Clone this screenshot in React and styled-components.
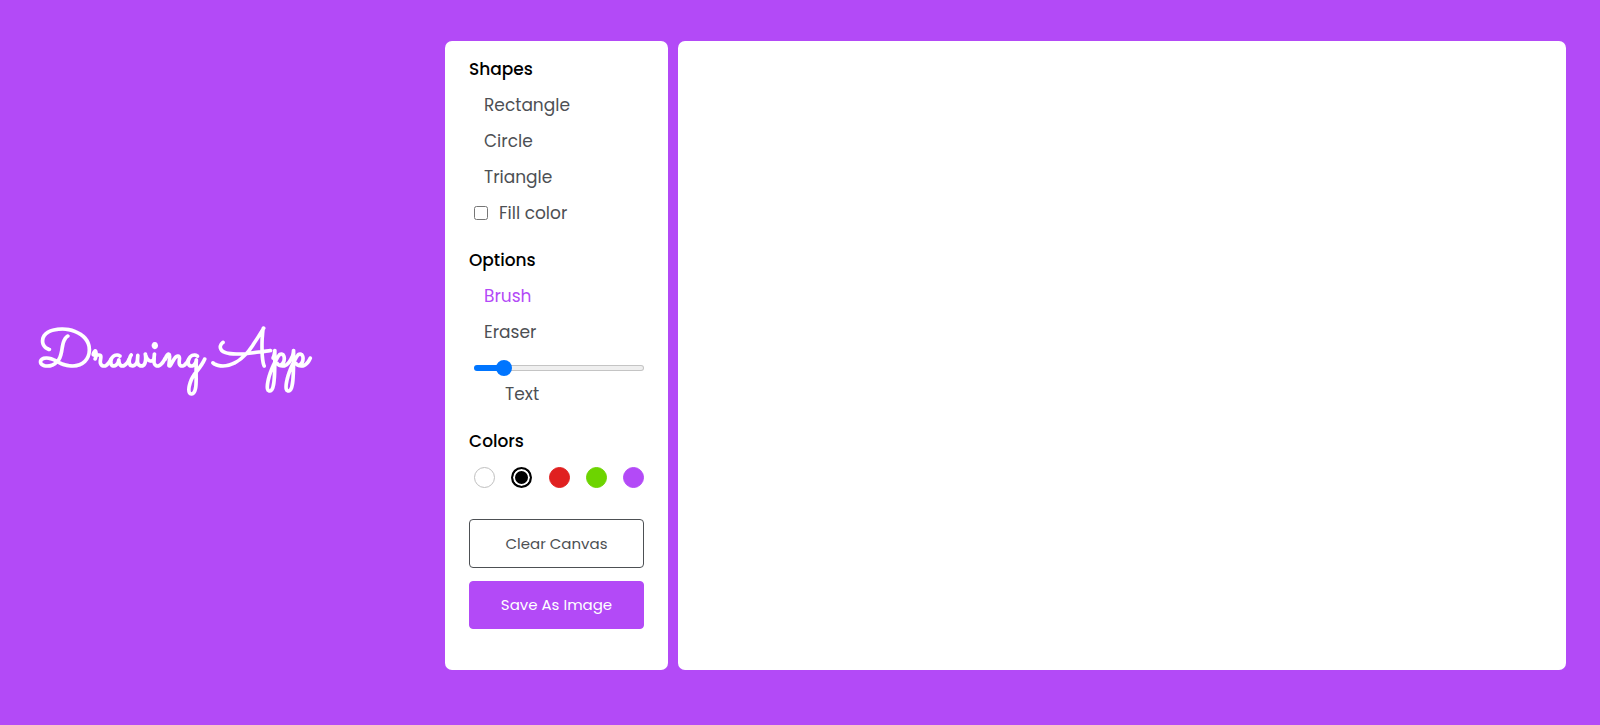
import React, { useState } from "react";
import styled, { createGlobalStyle } from "styled-components";

const GlobalStyle = createGlobalStyle`
  * { box-sizing: border-box; }
  body {
    margin: 0;
    background: #b34af7;
    color: #4d5054;
    font-family: Poppins, Inter, "Noto Sans", sans-serif;
    font-size: 17px;
    line-height: 26px;
  }
`;

const Page = styled.main`
  display: grid;
  grid-template-columns: 407px 223px 1fr;
  column-gap: 10px;
  padding: 41px 34px 55px 28px;
`;

const Title = styled.h1`
  margin: 0;
  padding-left: 10px;
  align-self: center;
  color: #fff;
  font: 700 53px/78px Sacramento, "Liberation Serif", cursive;
  white-space: nowrap;
`;

const Tools = styled.aside`
  padding: 15px 24px 41px;
  background: #fff;
  border-radius: 7px;
`;

const Group = styled.section`
  margin-bottom: 21px;
`;

const Heading = styled.h2`
  margin: 0 0 10px;
  color: #000;
  font-size: 17px;
  font-weight: 500;
  line-height: 26px;
`;

const ToolList = styled.ul`
  list-style: none;
  margin: 0;
  padding: 0 0 0 5px;
  display: flex;
  flex-direction: column;
  gap: 10px;
`;

const Item = styled.li`
  display: flex;
  align-items: center;
  height: 26px;
`;

const ToolButton = styled.button`
  border: 0;
  background: none;
  margin: 0;
  padding: 0 0 0 ${(p) => (p.$indented ? 31 : 10)}px;
  display: block;
  font: inherit;
  cursor: pointer;
  color: ${(p) => (p.$active ? "#b34af7" : "inherit")};
`;

const Check = styled.input`
  width: 14px;
  height: 14px;
  margin: 0 11px 0 0;
`;

const Range = styled.input`
  appearance: none;
  flex: 1;
  min-width: 0;
  height: 16px;
  margin: 0;
  background: none;

  &::-webkit-slider-runnable-track {
    height: 6px;
    border: 1px solid transparent;
    border-radius: 3px;
    background:
      linear-gradient(#0075ff, #0075ff) 0 0 / var(--filled) 100% no-repeat border-box,
      linear-gradient(#efefef, #efefef) padding-box,
      linear-gradient(#c4c4c4, #c4c4c4) border-box;
  }

  &::-webkit-slider-thumb {
    appearance: none;
    width: 16px;
    height: 16px;
    margin-top: -6px;
    border-radius: 50%;
    background: #0075ff;
  }
`;

const Swatches = styled.div`
  display: flex;
  align-items: center;
  justify-content: space-between;
  height: 26px;
  padding-left: 5px;
`;

const Swatch = styled.input`
  appearance: none;
  width: 21px;
  height: 21px;
  margin: 0;
  border-radius: 50%;
  background: ${(p) => p.$color};
  border: 1px solid ${(p) => p.$edge || p.$color};
  cursor: pointer;

  &:checked {
    border-width: 2px;
    box-shadow: inset 0 0 0 2px #fff;
  }
`;

const Actions = styled.div`
  display: flex;
  flex-direction: column;
  gap: 13px;
  margin-top: 29px;
`;

const Action = styled.button`
  width: 100%;
  height: ${(p) => (p.$primary ? 48 : 49)}px;
  padding: 0;
  border: 1px solid ${(p) => (p.$primary ? "#b34af7" : "#4d5054")};
  border-radius: 4px;
  background: ${(p) => (p.$primary ? "#b34af7" : "#fff")};
  color: ${(p) => (p.$primary ? "#fff" : "#4d5054")};
  font: inherit;
  font-size: 15px;
  cursor: pointer;
`;

const Board = styled.section`
  display: flex;
  background: #fff;
  border-radius: 7px;
  overflow: hidden;
`;

const Canvas = styled.canvas`
  flex: 1;
  min-width: 0;
`;

const colors = [
  { name: "White", value: "#fff", edge: "#bfbfbf" },
  { name: "Black", value: "#000" },
  { name: "Red", value: "#e02020" },
  { name: "Green", value: "#6dd400" },
  { name: "Purple", value: "#b34af7" },
];

const MIN_SIZE = 1;
const MAX_SIZE = 30;

export default function App() {
  const [tool, setTool] = useState("Brush");
  const [color, setColor] = useState("Black");
  const [size, setSize] = useState(5);
  const filled = `${((size - MIN_SIZE) / (MAX_SIZE - MIN_SIZE)) * 100}%`;

  const renderTool = (name) => (
    <Item key={name}>
      <ToolButton type="button" $active={tool === name} onClick={() => setTool(name)}>
        {name}
      </ToolButton>
    </Item>
  );

  return (
    <>
      <GlobalStyle />
      <Page>
        <Title>Drawing App</Title>
        <Tools>
          <Group>
            <Heading>Shapes</Heading>
            <ToolList>
              {["Rectangle", "Circle", "Triangle"].map(renderTool)}
              <Item>
                <Check type="checkbox" id="fill" />
                <label htmlFor="fill">Fill color</label>
              </Item>
            </ToolList>
          </Group>
          <Group>
            <Heading>Options</Heading>
            <ToolList>
              {["Brush", "Eraser"].map(renderTool)}
              <li>
                <Item as="div">
                  <Range
                    type="range"
                    aria-label="Brush size"
                    min={MIN_SIZE}
                    max={MAX_SIZE}
                    value={size}
                    style={{ "--filled": filled }}
                    onChange={(e) => setSize(Number(e.target.value))}
                  />
                </Item>
                <ToolButton
                  type="button"
                  $indented
                  $active={tool === "Text"}
                  onClick={() => setTool("Text")}
                >
                  Text
                </ToolButton>
              </li>
            </ToolList>
          </Group>
          <section>
            <Heading>Colors</Heading>
            <Swatches>
              {colors.map((c) => (
                <Swatch
                  key={c.name}
                  type="radio"
                  name="color"
                  aria-label={c.name}
                  $color={c.value}
                  $edge={c.edge}
                  checked={color === c.name}
                  onChange={() => setColor(c.name)}
                />
              ))}
            </Swatches>
          </section>
          <Actions>
            <Action type="button">Clear Canvas</Action>
            <Action type="button" $primary>
              Save As Image
            </Action>
          </Actions>
        </Tools>
        <Board>
          <Canvas />
        </Board>
      </Page>
    </>
  );
}
